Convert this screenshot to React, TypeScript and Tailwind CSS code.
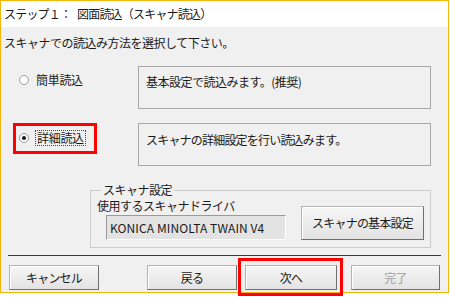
import React from 'react';

const font = { fontFamily: '"Noto Sans CJK JP", "Noto Sans", sans-serif' };

function Radio({ checked }: { checked?: boolean }) {
  return (
    <svg width="10" height="10" viewBox="0 0 10 10" className="shrink-0">
      <circle cx="5" cy="5" r="4.5" fill="#fff" stroke="#9a9a9a" strokeWidth="1" />
      {checked && <circle cx="5" cy="5" r="2" fill="#1a1a1a" />}
    </svg>
  );
}

function WinButton({ label, disabled, className = '' }: { label: string; disabled?: boolean; className?: string }) {
  return (
    <button
      className={`flex h-[25px] items-center justify-center border border-[#b4b4b4] border-b-[#6f6f6f] border-r-[#6f6f6f] bg-gradient-to-b from-[#f6f6f6] to-[#e3e3e3] shadow-[inset_1px_1px_0_#ffffff] text-[12px] tracking-[-0.8px] ${
        disabled ? 'text-[#a0a0a0]' : 'text-[#1a1a1a]'
      } ${className}`}
    >
      {label}
    </button>
  );
}

export default function App() {
  return (
    <div className="h-[297px] w-[450px] bg-white" style={font}>
      <div className="relative flex h-[293px] w-[449px] flex-col border border-[#f5b50a]">
        {/* title bar */}
        <div className="flex h-[26px] items-center bg-white pl-[3px] text-[12px] tracking-[-0.8px] text-[#1a1a1a]">
          <span className="w-[73px]">ステップ１：</span>
          <span>図面読込（スキャナ読込）</span>
        </div>

        <div className="flex flex-1 flex-col bg-[#f0f0f0] pt-[8px] text-[#1a1a1a]">
          <p className="h-[16px] pl-[3px] text-[12px] leading-[16px] tracking-[-0.5px]">
            スキャナでの読込み方法を選択して下さい。
          </p>

          {/* option 1 */}
          <div className="mt-[15px] flex items-start">
            <label className="mt-[7px] flex w-[137px] items-center gap-[7px] pl-[18px] text-[12px] leading-[14px] tracking-[-0.3px]">
              <Radio />
              <span>簡単読込</span>
            </label>
            <div className="h-[43px] w-[293px] border border-[#a8a8a8] px-[7px] pt-[8px] text-[12px] leading-[14px] tracking-[-0.5px]">
              基本設定で読込みます。(推奨)
            </div>
          </div>

          {/* option 2 */}
          <div className="relative mt-[14px] flex items-start">
            <label className="mt-[7px] flex w-[137px] items-center gap-[6px] pl-[18px] text-[12px] leading-[14px] tracking-[-0.3px]">
              <Radio checked />
              <span className="border border-dotted border-[#444] px-[1px]">詳細読込</span>
            </label>
            <div className="h-[43px] w-[293px] border border-[#a8a8a8] px-[7px] pt-[9px] text-[12px] leading-[14px] tracking-[-0.8px]">
              スキャナの詳細設定を行い読込みます。
            </div>
            <span className="pointer-events-none absolute left-[12px] top-0 h-[31px] w-[84px] border-[3px] border-[#ff0000]" />
          </div>

          {/* scanner settings group */}
          <fieldset className="ml-[89px] mt-[18px] w-[341px] border border-[#cdcdcd] pb-[7px] pl-[6px] pr-[6px]">
            <legend className="ml-[4px] px-[2px] text-[12px] leading-[12px] tracking-[-0.5px]">スキャナ設定</legend>
            <div className="flex items-end justify-between">
              <div className="flex flex-col pt-[4px]">
                <span className="text-[12px] leading-[12px] tracking-[-0.5px]">使用するスキャナドライバ</span>
                <div className="ml-[9px] mt-[3px] flex h-[25px] w-[180px] items-center border border-[#9a9a9a] border-b-white border-r-white bg-[#e3e3e3] pl-[3px] text-[12px] tracking-[0.1px]">
                  KONICA MINOLTA TWAIN V4
                </div>
              </div>
              <WinButton label="スキャナの基本設定" className="h-[34px] w-[123px]" />
            </div>
          </fieldset>

          {/* separator */}
          <div className="mx-[7px] mt-[7px] border-t border-[#3a3a3a]" />

          {/* footer buttons */}
          <div className="mt-[9px] flex items-center pl-[8px]">
            <WinButton label="キャンセル" className="w-[90px]" />
            <WinButton label="戻る" className="ml-[48px] w-[90px]" />
            <div className="relative ml-[8px]">
              <WinButton label="次へ" className="w-[92px]" />
              <span className="pointer-events-none absolute -left-[7px] -top-[7px] h-[38px] w-[105px] border-[3px] border-[#ff0000]" />
            </div>
            <WinButton label="完了" disabled className="ml-[14px] w-[89px]" />
          </div>
        </div>
      </div>
    </div>
  );
}
